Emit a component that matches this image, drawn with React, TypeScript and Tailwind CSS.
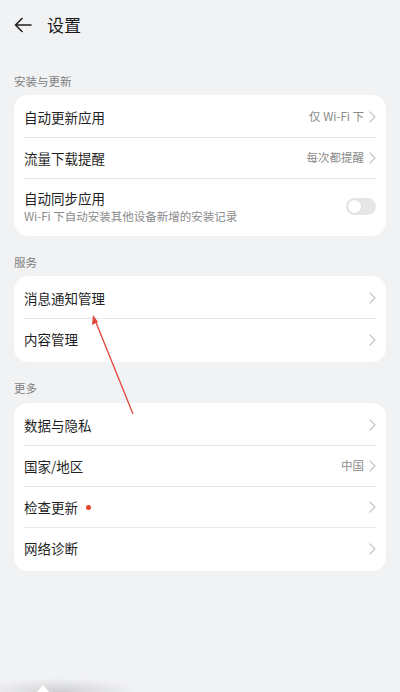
import React from "react";

const font = { fontFamily: '"Noto Sans CJK SC", "Noto Sans", sans-serif' };

function Chevron() {
  return (
    <svg width="7" height="12" viewBox="0 0 7 12" className="shrink-0">
      <path d="M1 1 L6 6 L1 11" fill="none" stroke="#c4c4c4" strokeWidth="1.2" strokeLinecap="round" strokeLinejoin="round" />
    </svg>
  );
}

function Row({ label, value, dot, last }: { label: string; value?: string; dot?: boolean; last?: boolean }) {
  return (
    <div className={`flex items-center h-[41px] mx-[10px] ${last ? "" : "border-b border-[#e6e7e9]"}`}>
      <span className="text-[13.5px] text-[#1f1f1f]">{label}</span>
      {dot && <span className="ml-[8px] w-[5px] h-[5px] rounded-full bg-[#e8412c]" />}
      <div className="flex-1" />
      {value && <span className="text-[11.5px] text-[#8a8a8a] mr-[5px]">{value}</span>}
      <Chevron />
    </div>
  );
}

function Label({ children, className = "" }: { children: React.ReactNode; className?: string }) {
  return <div className={`text-[11.5px] text-[#7f7f7f] px-[14px] ${className}`}>{children}</div>;
}

export default function App() {
  return (
    <div className="relative w-[400px] h-[692px] bg-[#f1f2f4] overflow-hidden" style={font}>
      {/* header */}
      <div className="flex items-center h-[50px] pl-[14px]">
        <svg width="18" height="16" viewBox="0 0 18 16">
          <path d="M17 8 H2 M8 1.5 L1.5 8 L8 14.5" fill="none" stroke="#222" strokeWidth="1.6" strokeLinecap="round" strokeLinejoin="round" />
        </svg>
        <span className="ml-[15px] text-[17px] text-[#1a1a1a]">设置</span>
      </div>

      <Label className="mt-[23px] leading-[16px]">安装与更新</Label>
      <div className="mx-[14px] mt-[6px] bg-white rounded-[14px] pt-[2px] pb-[2px]">
        <Row label="自动更新应用" value="仅 Wi-Fi 下" />
        <Row label="流量下载提醒" value="每次都提醒" />
        <div className="flex items-center h-[55px] mx-[10px]">
          <div className="flex flex-col">
            <span className="text-[13.5px] text-[#1f1f1f] leading-[18px]">自动同步应用</span>
            <span className="text-[11.5px] text-[#8a8a8a] leading-[18px]">Wi-Fi 下自动安装其他设备新增的安装记录</span>
          </div>
          <div className="flex-1" />
          <div className="w-[30px] h-[17px] rounded-full bg-[#e6e6e6] flex items-center pl-[1px]">
            <div className="w-[15px] h-[15px] rounded-full bg-white border border-[#dadada]" />
          </div>
        </div>
      </div>

      <Label className="mt-[18px] leading-[16px]">服务</Label>
      <div className="mx-[14px] mt-[6px] bg-white rounded-[14px] pt-[2px] pb-[2px]">
        <Row label="消息通知管理" />
        <Row label="内容管理" last />
      </div>

      <Label className="mt-[18px] leading-[16px]">更多</Label>
      <div className="mx-[14px] mt-[7px] bg-white rounded-[14px] pt-[2px] pb-[2px]">
        <Row label="数据与隐私" />
        <Row label="国家/地区" value="中国" />
        <Row label="检查更新" dot />
        <Row label="网络诊断" last />
      </div>

      {/* red annotation arrow */}
      <svg className="absolute left-0 top-0 pointer-events-none" width="400" height="692">
        <line x1="133" y1="414" x2="95" y2="320" stroke="#e0463a" strokeWidth="1.3" />
        <path d="M93 315 L92 325 L98 322 Z" fill="#e0463a" />
      </svg>

      {/* bottom shadow */}
      <div
        className="absolute left-0 bottom-0 w-[150px] h-[16px]"
        style={{ background: "radial-gradient(ellipse 75px 14px at 60px 100%, rgba(0,0,0,0.14), rgba(0,0,0,0))" }}
      />
      <div className="absolute left-[37px] bottom-0 w-0 h-0 border-l-[6px] border-r-[6px] border-b-[7px] border-l-transparent border-r-transparent border-b-white" />
    </div>
  );
}
